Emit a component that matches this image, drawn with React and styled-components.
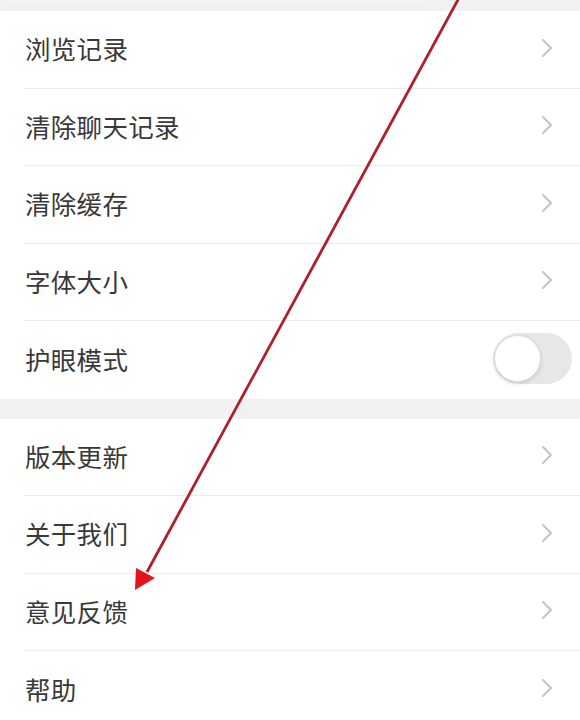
import React from "react";
import styled, { createGlobalStyle } from "styled-components";

const GlobalStyle = createGlobalStyle`
  html, body {
    margin: 0;
    padding: 0;
    background: #ffffff;
  }
  body {
    font-family: "Noto Sans CJK SC", "Noto Sans", sans-serif;
  }
`;

const groups = [
  [
    { label: "浏览记录" },
    { label: "清除聊天记录" },
    { label: "清除缓存" },
    { label: "字体大小" },
    { label: "护眼模式", toggle: true },
  ],
  [
    { label: "版本更新" },
    { label: "关于我们" },
    { label: "意见反馈" },
    { label: "帮助" },
  ],
];

export default function App() {
  return (
    <Page>
      <GlobalStyle />
      <TopStrip>
        <TopCardEdge />
      </TopStrip>
      {groups.map((items, gi) => (
        <React.Fragment key={gi}>
          {gi > 0 && <Gap />}
          <Group>
            {items.map((item) => (
              <Row key={item.label}>
                <Label>{item.label}</Label>
                {item.toggle ? (
                  <Switch>
                    <Knob />
                  </Switch>
                ) : (
                  <Chevron viewBox="0 0 12 20">
                    <path d="M2 2 L10 10 L2 18" />
                  </Chevron>
                )}
              </Row>
            ))}
          </Group>
        </React.Fragment>
      ))}
      <ArrowLayer viewBox="0 0 580 720">
        <line x1="460" y1="-4" x2="147" y2="572" />
        <polygon points="135,590 136,568 155,578" />
      </ArrowLayer>
    </Page>
  );
}

const Page = styled.div`
  position: relative;
  width: 580px;
  height: 720px;
  overflow: hidden;
  background: #ffffff;
`;

const TopStrip = styled.div`
  height: 11px;
  background: #f1f1f1;
  display: flex;
  justify-content: center;
`;

const TopCardEdge = styled.div`
  width: 420px;
  height: 3px;
  margin-left: -150px;
  background: #f5f5f5;
  border-radius: 0 0 6px 6px;
`;

const Gap = styled.div`
  height: 20px;
  background: #f1f1f1;
`;

const Group = styled.div`
  background: #ffffff;
`;

const Row = styled.div`
  display: flex;
  align-items: center;
  justify-content: space-between;
  height: 77.5px;
  box-sizing: border-box;
  margin-left: 24px;
  padding-left: 1px;
  padding-right: 8px;
  padding-bottom: 3px;
  border-bottom: 1px solid #ededed;

  &:last-child {
    border-bottom: none;
  }
`;

const Label = styled.span`
  font-size: 25.5px;
  color: #393939;
  letter-spacing: 0.3px;
`;

const Chevron = styled.svg`
  width: 12px;
  height: 20px;
  margin-right: 19px;
  fill: none;
  stroke: #c3c3c3;
  stroke-width: 2;
  stroke-linecap: round;
  stroke-linejoin: round;
`;

const Switch = styled.div`
  position: relative;
  display: flex;
  align-items: center;
  width: 79px;
  height: 51px;
  border-radius: 26px;
  background: #e7e7e7;
`;

const Knob = styled.div`
  width: 45px;
  height: 45px;
  margin-left: 1px;
  border-radius: 50%;
  background: #ffffff;
  border: 1px solid #dcdcdc;
  box-shadow: 0 2px 4px rgba(0, 0, 0, 0.12);
`;

const ArrowLayer = styled.svg`
  position: absolute;
  left: 0;
  top: 0;
  width: 580px;
  height: 720px;
  pointer-events: none;

  line {
    stroke: #b01e2c;
    stroke-width: 2.8;
  }
  polygon {
    fill: #e3141c;
  }
`;
